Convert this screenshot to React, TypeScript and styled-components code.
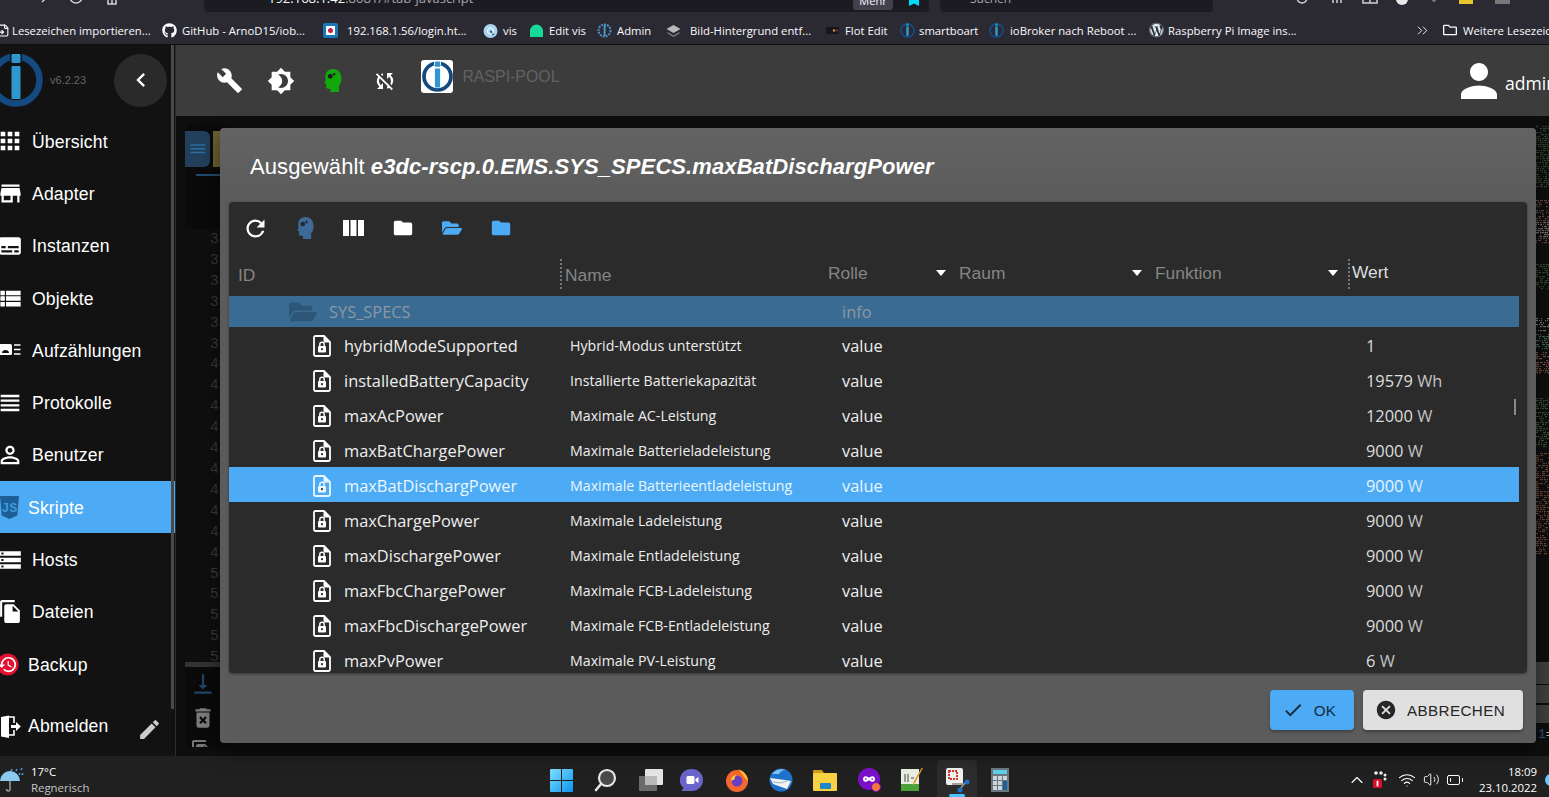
import React from "react";
import styled, { createGlobalStyle } from "styled-components";
import {
  MdApps, MdStore, MdSubtitles, MdViewList, MdViewHeadline, MdPersonOutline, MdStorage, MdFileCopy,
  MdEdit, MdBuild, MdBrightness4, MdSyncDisabled, MdPerson, MdRefresh, MdFolder, MdDehaze,
  MdCheck, MdCancel, MdVerticalAlignBottom, MdDeleteForever, MdChevronLeft,
} from "react-icons/md";
import { FaFolderOpen, FaGithub, FaWordpress, FaRegFolder } from "react-icons/fa";
import { ChevronUp, ChevronsRight, Wifi, Volume2, BatteryLow, FileInput } from "lucide-react";

const Global = createGlobalStyle`
  html, body { margin: 0; padding: 0; background: #0d0d0d; overflow: hidden; }
  * { box-sizing: border-box; }
`;

const Page = styled.div`
  position: relative; width: 1549px; height: 797px; overflow: hidden;
  display: flex; flex-direction: column;
  font-family: "Liberation Sans", Arial, sans-serif; color: #fff;
`;

/* browser chrome */
const Chrome = styled.div`
  height: 45px; flex: none; background: #2b2a33; border-bottom: 1px solid #0c0c0e;
  display: flex; flex-direction: column; overflow: hidden;
`;
const TopStrip = styled.div`height: 18px; flex: none; display: flex; position: relative;`;
const Sliver = styled.svg`width: 204px; height: 18px; flex: none;`;
const UrlBar = styled.div`
  width: 725px; height: 20px; margin-top: -8px; background: #1c1b22; border-radius: 4px; flex: none;
  display: flex; align-items: flex-start; padding-left: 64px; font: 13px "Open Sans", sans-serif; color: #fbfbfe;
  span { margin-top: -3px; } i { font-style: normal; color: #a5a5aa; }
`;
const Pill = styled.div`
  width: 40px; height: 14px; margin: -4px 0 0 -76px; background: #42414d; border-radius: 3px;
  font: 11px "Open Sans", sans-serif; color: #fbfbfe; text-align: center; line-height: 10px; flex: none;
`;
const Star = styled.div`
  width: 10px; height: 6px; margin-left: 16px; background: #00ddff; flex: none;
  clip-path: polygon(0 0, 100% 0, 100% 100%, 50% 60%, 0 100%);
`;
const SearchBar = styled.div`
  width: 273px; height: 20px; margin: -8px 0 0 21px; background: #1c1b22; border-radius: 4px; flex: none;
  font: 12px "Open Sans", sans-serif; color: #a5a5aa; padding: 0 0 0 30px; line-height: 13px;
`;
const Tools = styled.svg`width: 240px; height: 18px; margin-left: 84px; flex: none;`;
const Bookmarks = styled.div`
  height: 26px; flex: none; display: flex; align-items: center; margin-left: -4px; padding-bottom: 2px;
  font: 11.3px "Open Sans", sans-serif; color: #fbfbfe;
`;
const Bookmark = styled.div<{ $w: number; $gap?: number }>`
  width: ${(p) => p.$w}px; flex: none; display: flex; align-items: center; gap: ${(p) => p.$gap ?? 5}px; white-space: nowrap;
`;
const Fav = styled.span`width: 15px; height: 15px; flex: none; display: inline-flex; align-items: center; justify-content: center;`;
const BookmarkEnd = styled.div`
  margin-left: auto; display: flex; align-items: center; white-space: nowrap; width: 135px; gap: 6px; flex: none; overflow: hidden;
  svg { flex: none; }
  svg:first-child { margin-right: 6px; }
`;

/* app */
const Body = styled.div`flex: 1; display: flex; min-height: 0;`;
const Sidebar = styled.nav`
  width: 176px; flex: none; background: #121212; position: relative; display: flex; flex-direction: column;
  border-right: 1px solid #2e2e2e;
`;
const SideScroll = styled.div`position: absolute; left: 171px; top: 0; width: 3px; height: 664px; background: #4a4a4a;`;
const Brand = styled.div`height: 70px; flex: none; display: flex; align-items: center; position: relative;`;
const BrandLogo = styled.div`margin-left: -11px; width: 54px; height: 54px; flex: none;`;
const Version = styled.span`font-size: 11px; color: #666; margin-left: 7px; width: 64px; flex: none;`;
const Back = styled.button`
  width: 53px; height: 53px; border-radius: 50%; border: 0; background: #2a2a2a; color: #fff; flex: none; padding: 0;
  display: flex; align-items: center; justify-content: center;
`;
const NavList = styled.div`display: flex; flex-direction: column;`;
const NavItem = styled.div<{ $active?: boolean; $tight?: boolean }>`
  height: 52.3px; width: 175px; display: flex; align-items: center; font-size: 17.6px; letter-spacing: .16px; color: #fff;
  background: ${(p) => (p.$active ? "#4dabf5" : "transparent")};
  padding: 2px 0 0 ${(p) => (p.$tight ? 28 : 32)}px; position: relative;
`;
const NavIcon = styled.span`
  position: absolute; left: -1px; top: 50%; transform: translateY(-50%); width: 22px; height: 22px;
  display: flex; align-items: center; justify-content: center;
  svg { flex: none; }
`;
const Logout = styled(NavItem)`height: 60px; margin-top: auto; padding-top: 0;`;
const Pen = styled.span`position: absolute; left: 137px; top: 21px; color: #ccc; display: flex;`;

const Content = styled.div`flex: 1; display: flex; flex-direction: column; min-width: 0; background: #0e0e0e;`;
const TopBar = styled.header`
  height: 71px; flex: none; background: #3c3c3c; display: flex; align-items: center; padding-left: 28px;
`;
const TopIcon = styled.span<{ $color?: string }>`
  width: 51.6px; flex: none; display: flex; justify-content: center; color: ${(p) => p.$color ?? "#fff"};
`;
const LogoBox = styled.div`
  width: 32px; height: 33px; background: #fff; border-radius: 3px; padding: 1px 0.5px; margin-left: 11px; margin-top: -8px; flex: none;
`;
const HostName = styled.span`font-size: 15.9px; color: #626262; margin-left: 9px; margin-top: -7px;`;
const UserBox = styled.div`margin-left: auto; display: flex; align-items: center; width: 95px; flex: none; font: 17.6px "Open Sans", sans-serif; margin-top: 4px; white-space: nowrap; overflow: hidden;`;
const UserIcon = styled.span`display: flex; flex: none; margin: -6px -1px 0 -2px; transform: translateY(1px);`;

const Editor = styled.div`flex: 1; display: flex; min-height: 0; padding-top: 9px;`;
const Gutter = styled.div`width: 44px; margin-left: 9px; flex: none; display: flex; flex-direction: column; overflow: hidden; margin-bottom: 9px; border-radius: 6px;`;
const Tabs = styled.div`height: 104px; flex: none; background: #0a0a0a; padding-top: 6px; display: flex; gap: 3px; position: relative;`;
const TabBtn = styled.div<{ $bg: string }>`width: 25px; height: 36px; background: ${(p) => p.$bg}; border-radius: 0 6px 6px 0; flex: none; display: flex; align-items: center; justify-content: center; color: #2c6e9e;`;
const TabLine = styled.div`position: absolute; left: 11px; top: 49px; width: 30px; height: 2px; background: #234c70;`;
const Lines = styled.div`
  height: 433px; flex: none; padding: 0 0 0 25px; font: 14.5px/20.9px "Liberation Mono", monospace; color: #3a3a3a; background: #0f0f0f; overflow: hidden;
`;
const Split = styled.div`height: 5px; flex: none; background: #333;`;
const BottomTools = styled.div`flex: 1; background: #0a0a0a; display: flex; flex-direction: column; align-items: flex-start; padding: 4px 0 0 5px; gap: 8px; overflow: hidden; svg { flex: none; }`;
const Spacer = styled.div`flex: 1;`;
const Strip = styled.div`width: 13px; flex: none; display: flex; flex-direction: column; margin-bottom: 11px;`;
const Noise = styled.svg`width: 13px; height: 537px; flex: none; display: block; opacity: .75;`;
const StripBand = styled.div`height: 62px; flex: none; background: #414141; display: flex; flex-direction: column; padding-top: 22px; gap: 18px;`;
const StripLine = styled.div`height: 2px; background: #0a0a0a;`;
const StripFoot = styled.div`flex: 1; font: 13px "Liberation Mono", monospace; color: #2a5a8a; padding-left: 2px; padding-top: 3px; white-space: nowrap; span { color: #bbb; }`;

/* dialog */
const Dialog = styled.div`
  position: absolute; left: 220px; top: 128px; width: 1316px; height: 615px; border-radius: 4px;
  background: linear-gradient(#636363, #5b5b5b 12%, #5b5b5b); display: flex; flex-direction: column;
  box-shadow: 0 8px 20px rgba(0,0,0,.5);
`;
const Title = styled.h2`
  margin: 0; height: 74px; flex: none; padding: 24px 0 0 30px; font-weight: 400; font-size: 22px; letter-spacing: .09px; line-height: 30px; color: #fff; white-space: nowrap;
  b { font-style: italic; font-weight: 700; }
`;
const Paper = styled.div`
  margin: 0 9px; height: 471px; flex: none; background: #2b2b2b; border-radius: 4px; position: relative; overflow: hidden;
  box-shadow: 0 1px 3px rgba(0,0,0,.4); display: flex; flex-direction: column;
`;
const PaperBar = styled.div`height: 52px; flex: none; display: flex; align-items: center; padding-left: 2px;`;
const BarIcon = styled.span<{ $color?: string }>`width: 49px; flex: none; display: flex; justify-content: center; color: ${(p) => p.$color ?? "#fff"};`;
const TableHead = styled.div`height: 42px; flex: none; display: flex; font-size: 17.4px; color: #858585;`;
const HeadCell = styled.div<{ $w?: number; $dot?: boolean; $bright?: boolean; $pl?: number; $pr?: number; $up?: number }>`
  ${(p) => (p.$w ? `width: ${p.$w}px; flex: none;` : "flex: 1;")}
  display: flex; align-items: center; justify-content: space-between; position: relative;
  padding: 0 ${(p) => p.$pr ?? 0}px ${(p) => p.$up ?? 0}px ${(p) => p.$pl ?? 0}px;
  color: ${(p) => (p.$bright ? "#ddd" : "#858585")};
  ${(p) => p.$dot && `&::before { content: ""; position: absolute; left: 0; top: 5px; height: 30px; border-left: 2px dotted #777; }`}
`;
const Caret = styled.i`width: 0; height: 0; border: 5.5px solid transparent; border-top: 6px solid #fff; border-bottom: 0; flex: none;`;
const Rows = styled.div`flex: 1; overflow: hidden; margin-right: 8px;`;
const Row = styled.div<{ $kind?: "folder" | "selected" }>`
  display: grid; grid-template-columns: 341px 272px 524px 1fr; align-items: center;
  height: ${(p) => (p.$kind === "folder" ? 31.4 : 35)}px;
  padding-top: ${(p) => (p.$kind === "folder" ? 0 : 2)}px;
  background: ${(p) => (p.$kind === "folder" ? "#3a6b92" : p.$kind === "selected" ? "#4dabf5" : "transparent")};
  color: ${(p) => (p.$kind === "folder" ? "#8b99a5" : p.$kind === "selected" ? "#eaf6ff" : "#eee")};
  font: 16.4px "Open Sans", sans-serif;
`;
const IdCell = styled.div<{ $indent: number }>`display: flex; align-items: center; padding-left: ${(p) => p.$indent}px; gap: 13px; white-space: nowrap;`;
const DescCell = styled.div`font-size: 14.2px; white-space: nowrap;`;
const ValueCell = styled.div<{ $kind?: string }>`
  white-space: nowrap; color: ${(p) => (p.$kind === "selected" ? "#eaf6ff" : "#ddd")};
  span { opacity: .85; }
`;
const ScrollThumb = styled.div`position: absolute; right: 11px; top: 197px; width: 2px; height: 16px; background: #8a8a8a;`;
const Actions = styled.div`flex: 1; display: flex; justify-content: flex-end; align-items: center; gap: 9px; padding: 4px 13px 0 0;`;
const Btn = styled.button<{ $primary?: boolean; $w: number }>`
  height: 40px; width: ${(p) => p.$w}px; border: 0; border-radius: 4px; background: ${(p) => (p.$primary ? "#4dabf5" : "#e0e0e0")};
  color: ${(p) => (p.$primary ? "#152a3c" : "#262626")}; font: 15.2px "Liberation Sans", sans-serif; letter-spacing: .4px;
  display: flex; align-items: center; justify-content: center; gap: 10px; padding: 0 6px 0 0;
  box-shadow: 0 2px 3px rgba(0,0,0,.3);
`;

/* taskbar */
const Taskbar = styled.footer`
  height: 41px; flex: none; background: #202020; display: flex; align-items: center; position: relative; padding-right: 12px;
`;
const Weather = styled.div`width: 300px; display: flex; align-items: center; gap: 7px; flex: none; padding-top: 6px;`;
const WeatherText = styled.div`font: 11.4px/16px "Open Sans", sans-serif; color: #fff; margin-top: 1px; small { display: block; font-size: 11.4px; color: #c4c4c4; }`;
const Apps = styled.div`margin-left: 239px; display: flex; align-items: center; flex: none;`;
const AppBtn = styled.div<{ $w: number; $active?: boolean }>`
  width: ${(p) => p.$w}px; height: 41px; padding-top: 7px; display: flex; align-items: center; justify-content: center; flex: none; position: relative;
  ${(p) => p.$active && "background: #2c2c2c; border-radius: 4px 4px 0 0; height: 37px; margin-top: 4px; padding-top: 3px; &::after { content: ''; position: absolute; bottom: 0; left: 12px; width: 16px; height: 3px; background: #4cc2ff; border-radius: 2px; }"}
`;
const Tray = styled.div`margin-left: auto; display: flex; align-items: center; color: #fff; flex: none; padding-top: 6px;`;
const TrayIcon = styled.span<{ $w: number }>`width: ${(p) => p.$w}px; display: flex; justify-content: center; flex: none;`;
const Clock = styled.div`font: 11.4px/16px "Open Sans", sans-serif; text-align: right; width: 60px; margin-left: 8px; color: #fff;`;
const Notify = styled.div`position: absolute; left: 1545px; top: 18px; width: 12px; height: 12px; border-radius: 50%; background: #60cdff;`;

/* drawings */
const IoLogo = ({ size, ring = "#144a80", bar = "#2f97cf", bg = "transparent" }: { size: number; ring?: string; bar?: string; bg?: string }) => (
  <svg width={size} height={size} viewBox="0 0 54 54" style={{ display: "block" }}>
    <circle cx="27" cy="27" r="23.5" fill={bg} stroke={ring} strokeWidth="6.5" />
    <rect x="21" y="-1" width="12" height="8" fill={bg === "transparent" ? "#121212" : bg} />
    <rect x="22.5" y="1" width="9" height="9" rx="1" fill={bar} />
    <rect x="22.5" y="13" width="9" height="33" rx="1" fill={bar} />
  </svg>
);
const Head = ({ size, color, dot = "#1b1b1b" }: { size: number; color: string; dot?: string }) => (
  <svg width={size} height={size} viewBox="0 0 24 24" style={{ display: "block" }}>
    <path fill={color} d="M12.6 1C8.4 1 5.5 3.8 5.2 7.6 5 9.4 5.2 10.5 5.6 11.5L4.4 14.2c-.2.5.1.8.6.8h1v3.2c0 1 .7 1.6 1.6 1.6H10V23h8.2v-6c1.6-1.7 2.4-3.8 2.4-6.6C20.600 5 17.600 1 12.600 1z" />
    <circle cx="9.800" cy="8" r="2.300" fill={dot} />
    <path stroke={dot} strokeWidth="1" d="M13.500 4.500v3M12 6h3" />
  </svg>
);
const FileLock = ({ fg }: { fg: string }) => (
  <svg width="18" height="22" viewBox="0 0 18 22" style={{ display: "block", flex: "none" }}>
    <path fill="none" stroke={fg} strokeWidth="1.800" d="M2.500 1h8.500l6 6v12.500c0 .8-.6 1.500-1.500 1.500h-13c-.8 0-1.500-.7-1.500-1.500V2.500C1 1.700 1.700 1 2.500 1z" />
    <path fill={fg} d="M10.500 1l6.500 6.500h-5c-.8 0-1.500-.7-1.500-1.500z" />
    <rect x="5" y="11" width="8" height="6.500" rx="1" fill={fg} />
    <path fill="none" stroke={fg} strokeWidth="1.400" d="M6.800 11V9.400c0-2.900 4.400-2.900 4.400 0V11" />
    <circle cx="9" cy="14.200" r="1.100" fill="#2b2b2b" />
  </svg>
);
const Columns = () => (
  <svg width="21" height="16" viewBox="0 0 21 16" style={{ display: "block" }}>
    <path fill="#fff" d="M0 0h6v16H0zM7.500 0h6v16h-6zM15 0h6v16h-6z" />
  </svg>
);
const JsShield = () => (
  <svg width="19" height="23" viewBox="0 0 19 23" style={{ marginLeft: -2 }}>
    <path fill="#1c5f96" d="M0 0h19l-1.700 19.500L9.500 23l-7.800-3.500z" />
    <text x="9.500" y="15.500" textAnchor="middle" fontSize="13" fontWeight="700" fontFamily="Liberation Mono, monospace" fill="#3a9ad9">JS</text>
  </svg>
);
const BackupIcon = () => (
  <svg width="23" height="23" viewBox="0 0 23 23" style={{ marginLeft: -5 }}>
    <circle cx="11.500" cy="11.500" r="11" fill="#e3102f" />
    <g transform="translate(1.500 1.500) scale(.84)">
      <path fill="#fff" d="M13 3a9 9 0 0 0-9 9H1l3.900 3.900.1.100L9 12H6a7 7 0 1 1 2.100 4.900l-1.400 1.400A9 9 0 1 0 13 3zm-1 5v5l4.300 2.500.7-1.200-3.500-2.100V8z" />
    </g>
  </svg>
);
const EnumIcon = () => (
  <svg width="22" height="14" viewBox="0 0 22 14">
    <rect x="0" y="1" width="13" height="11" rx="1.500" fill="#fff" />
    <path fill="#121212" d="M3 10c0-2 1.500-3 3.500-3s3.500 1 3.500 3z" />
    <path stroke="#fff" strokeWidth="1.600" d="M15 2h6.500M15 6.500h6.500M15 11h6.500" />
  </svg>
);
const DoorOut = () => (
  <svg width="21" height="23" viewBox="0 0 21 23">
    <path fill="#fff" d="M1 2l8-1.500V23l-8-1.500z" />
    <path fill="none" stroke="#fff" strokeWidth="1.600" d="M9 2h5v6M14 15v5H9" />
    <path fill="#fff" d="M11 10h5V7l4.800 4.500L16 16v-3h-5z" />
  </svg>
);
const Noisy = () => {
  const bands: [number, number, string][] = [
    [110, 178, "#3f5a3a"], [190, 233, "#7a5a55"], [212, 228, "#8f8f8f"], [254, 279, "#42603f"], [308, 322, "#9a9a9a"],
    [324, 340, "#4a8a70"], [342, 363, "#9a6a58"], [388, 400, "#4a6a42"], [402, 438, "#4a6e42"], [443, 544, "#8a5a48"],
  ];
  let s = 12345;
  const rnd = () => ((s = (s * 1103515245 + 12345) & 0x7fffffff) / 0x7fffffff);
  const rects: React.ReactElement[] = [];
  bands.forEach(([a, b, c], i) => {
    for (let y = a; y < b; y += 2) {
      let x = 0;
      while (x < 13) {
        const w = 1 + Math.floor(rnd() * 3);
        if (rnd() > 0.3) rects.push(<rect key={`${i}-${y}-${x}`} x={x} y={y - 115} width={w} height="1.2" fill={c} />);
        x += w + 1;
      }
    }
  });
  return <Noise viewBox="0 0 13 537">{rects}</Noise>;
};

type FileRow = { id: string; desc: string; val: string; unit?: string; selected?: boolean };
const rows: FileRow[] = [
  { id: "hybridModeSupported", desc: "Hybrid-Modus unterstützt", val: "1" },
  { id: "installedBatteryCapacity", desc: "Installierte Batteriekapazität", val: "19579", unit: "Wh" },
  { id: "maxAcPower", desc: "Maximale AC-Leistung", val: "12000", unit: "W" },
  { id: "maxBatChargePower", desc: "Maximale Batterieladeleistung", val: "9000", unit: "W" },
  { id: "maxBatDischargPower", desc: "Maximale Batterieentladeleistung", val: "9000", unit: "W", selected: true },
  { id: "maxChargePower", desc: "Maximale Ladeleistung", val: "9000", unit: "W" },
  { id: "maxDischargePower", desc: "Maximale Entladeleistung", val: "9000", unit: "W" },
  { id: "maxFbcChargePower", desc: "Maximale FCB-Ladeleistung", val: "9000", unit: "W" },
  { id: "maxFbcDischargePower", desc: "Maximale FCB-Entladeleistung", val: "9000", unit: "W" },
  { id: "maxPvPower", desc: "Maximale PV-Leistung", val: "6", unit: "W" },
];

const nav = [
  { label: "Übersicht", icon: <MdApps size={28} /> },
  { label: "Adapter", icon: <MdStore size={27} /> },
  { label: "Instanzen", icon: <MdSubtitles size={26} /> },
  { label: "Objekte", icon: <MdViewList size={27} /> },
  { label: "Aufzählungen", icon: <EnumIcon /> },
  { label: "Protokolle", icon: <MdViewHeadline size={28} /> },
  { label: "Benutzer", icon: <MdPersonOutline size={28} /> },
  { label: "Skripte", icon: <JsShield />, active: true, tight: true },
  { label: "Hosts", icon: <MdStorage size={26} /> },
  { label: "Dateien", icon: <MdFileCopy size={25} /> },
  { label: "Backup", icon: <BackupIcon />, tight: true },
];

const bookmarks = [
  { w: 166, text: "Lesezeichen importieren...", icon: <FileInput size={13} />, gap: 1 },
  { w: 161, text: "GitHub - ArnoD15/iob...", icon: <FaGithub size={15} /> },
  { w: 160, text: "192.168.1.56/login.ht...", gap: 9, icon: (
    <svg width="15" height="15" viewBox="0 0 15 15"><rect width="15" height="15" rx="2" fill="#1a78b8" /><rect x="3" y="3" width="9" height="9" fill="#fff" /><circle cx="7.500" cy="7.500" r="2.500" fill="#c5214a" /></svg>
  ) },
  { w: 46, text: "vis", icon: (
    <svg width="15" height="15" viewBox="0 0 15 15"><circle cx="7.500" cy="8" r="7" fill="#a9d4f2" /><path d="M7.500 8l3 4" stroke="#245" strokeWidth="1.500" /><circle cx="7.500" cy="8" r="3" fill="none" stroke="#fff" /></svg>
  ) },
  { w: 68, text: "Edit vis", icon: (
    <svg width="15" height="15" viewBox="0 0 15 15"><path d="M1 8a6.500 6.500 0 1 1 13 0v6H1z" fill="#17d99a" /></svg>
  ) },
  { w: 69, text: "Admin", icon: (
    <svg width="15" height="15" viewBox="0 0 15 15"><circle cx="7.500" cy="7.500" r="6" fill="none" stroke="#4d8fc4" strokeWidth="2" strokeDasharray="2 1" /><rect x="6.700" y="2" width="1.800" height="11" fill="#4d9fd4" /></svg>
  ) },
  { w: 159, text: "Bild-Hintergrund entf...", gap: 9, icon: (
    <svg width="15" height="15" viewBox="0 0 15 15"><path d="M7.500 2l7 4-7 4-7-4z" fill="#b9b9b9" /><path d="M1.500 9l6 3.500 6-3.500v1.500l-6 3.500-6-3.500z" fill="#7f7f7f" /></svg>
  ) },
  { w: 75, text: "Flot Edit", icon: (
    <svg width="15" height="15" viewBox="0 0 15 15"><rect x="1" y="4" width="13" height="7" fill="#17161b" /><circle cx="9" cy="7.500" r="1.200" fill="#c9a12c" /><circle cx="12" cy="7.500" r="1" fill="#b1238a" /></svg>
  ) },
  { w: 89, text: "smartboart", gap: 4, icon: <IoLogo size={15} ring="#154a80" /> },
  { w: 160, text: "ioBroker nach Reboot ...", gap: 6, icon: <IoLogo size={15} ring="#154a80" /> },
  { w: 170, text: "Raspberry Pi Image ins...", gap: 4, icon: <FaWordpress size={16} color="#d9edf7" /> },
];

const code = Array.from({ length: 21 }, (_, i) => 34 + i);

export default function App() {
  return (
    <Page>
      <Global />
      <Chrome>
        <TopStrip>
          <Sliver viewBox="0 0 204 18">
            <g fill="none" stroke="#cfcfd8" strokeWidth="1.500">
              <circle cx="76" cy="-3" r="6" />
              <path d="M108 0v4h8V0M112 0v4" />
              <path d="M42 -2l2 2-2 2" />
            </g>
          </Sliver>
          <UrlBar><span>192.168.1.42<i>:8081/#tab-javascript</i></span></UrlBar>
          <Pill>Mehr</Pill>
          <Star />
          <SearchBar>Suchen</SearchBar>
          <Tools viewBox="0 0 240 18">
            <g fill="none" stroke="#cfcfd8" strokeWidth="1.500">
              <circle cx="5" cy="-2" r="5" />
              <path d="M36 0v3M40 0v3M44 0v3" />
              <path d="M66 -2v5h14v-5M73 0v3" />
            </g>
            <circle cx="105" cy="-1" r="6" fill="#e8e8e8" />
            <circle cx="137" cy="0" r="2" fill="#777" />
            <rect x="162" y="-3" width="14" height="7" fill="#e5c72a" />
            <rect x="198" y="-3" width="15" height="7" fill="#777" />
          </Tools>
        </TopStrip>
        <Bookmarks>
          {bookmarks.map((b) => (
            <Bookmark key={b.text} $w={b.w} $gap={b.gap}>
              <Fav>{b.icon}</Fav>
              {b.text}
            </Bookmark>
          ))}
          <BookmarkEnd>
            <ChevronsRight size={17} strokeWidth={1.300} />
            <FaRegFolder size={14} />
            Weitere Lesezeichen
          </BookmarkEnd>
        </Bookmarks>
      </Chrome>
      <Body>
        <Sidebar>
          <Brand>
            <BrandLogo><IoLogo size={54} /></BrandLogo>
            <Version>v6.2.23</Version>
            <Back><MdChevronLeft size={28} /></Back>
          </Brand>
          <NavList>
            {nav.map((n) => (
              <NavItem key={n.label} $active={n.active} $tight={n.tight}>
                <NavIcon>{n.icon}</NavIcon>
                {n.label}
              </NavItem>
            ))}
          </NavList>
          <Logout $tight>
            <NavIcon><DoorOut /></NavIcon>
            Abmelden
            <Pen><MdEdit size={25} /></Pen>
          </Logout>
          <SideScroll />
        </Sidebar>
        <Content>
          <TopBar>
            <TopIcon><MdBuild size={27} /></TopIcon>
            <TopIcon><MdBrightness4 size={28} /></TopIcon>
            <TopIcon><Head size={25} color="#12a90c" /></TopIcon>
            <TopIcon><MdSyncDisabled size={24} /></TopIcon>
            <LogoBox><IoLogo size={31} bg="#fff" /></LogoBox>
            <HostName>RASPI-POOL</HostName>
            <UserBox><UserIcon><MdPerson size={54} /></UserIcon>admin</UserBox>
          </TopBar>
          <Editor>
            <Gutter>
              <Tabs>
                <TabBtn $bg="#22405c"><MdDehaze size={18} /></TabBtn>
                <TabBtn $bg="#6b6232" />
                <TabLine />
              </Tabs>
              <Lines>{code.map((c) => <div key={c}>{c}</div>)}</Lines>
              <Split />
              <BottomTools>
                <MdVerticalAlignBottom size={26} color="#234464" />
                <MdDeleteForever size={26} color="#7c7c7c" />
                <MdFileCopy size={24} color="#777" />
              </BottomTools>
            </Gutter>
            <Spacer />
            <Strip>
              <Noisy />
              <StripBand><StripLine /><StripLine /><StripLine /></StripBand>
              <StripFoot>1<span>=</span></StripFoot>
            </Strip>
          </Editor>
        </Content>
      </Body>
      <Taskbar>
        <Weather>
          <svg width="24" height="28" viewBox="0 0 24 28" style={{ flex: "none" }}>
            <path d="M0 15a10 10 0 0 1 20 0z" fill="#8cc9f0" />
            <path d="M10 15v8c0 2.500-3.500 2.500-3.500 0" fill="none" stroke="#9a9a9a" strokeWidth="1.500" />
            <path d="M12 3l-1 2M17 3l-1 2M22 2l-1 2M20 7l-1 2M23 7l-1 2" stroke="#4f9fe0" strokeWidth="1.500" />
          </svg>
          <WeatherText>17°C<small>Regnerisch</small></WeatherText>
        </Weather>
        <Apps>
          <AppBtn $w={44}>
            <svg width="23" height="23" viewBox="0 0 23 23"><defs><linearGradient id="w" x1="0" y1="0" x2="1" y2="1"><stop offset="0" stopColor="#7fe0ff" /><stop offset="1" stopColor="#0d93f0" /></linearGradient></defs><path fill="url(#w)" d="M0 1a1 1 0 0 1 1-1h10v11H0zM12 0h10a1 1 0 0 1 1 1v10H12zM0 12h11v11H1a1 1 0 0 1-1-1zM12 12h11v10a1 1 0 0 1-1 1H12z" /></svg>
          </AppBtn>
          <AppBtn $w={44}>
            <svg width="24" height="24" viewBox="0 0 24 24"><circle cx="14" cy="10" r="8" fill="#4a4a4a" stroke="#e6e6e6" strokeWidth="2.200" /><path d="M8 16l-5 6" stroke="#e6e6e6" strokeWidth="2.600" strokeLinecap="round" /></svg>
          </AppBtn>
          <AppBtn $w={48}>
            <svg width="24" height="22" viewBox="0 0 24 22"><rect x="0" y="7" width="18" height="15" rx="1" fill="#6b6b6b" /><rect x="6" y="0" width="18" height="16" rx="1" fill="#efefef" opacity=".95" /><rect x="6" y="7" width="12" height="9" fill="#b9b9b9" /></svg>
          </AppBtn>
          <AppBtn $w={34}>
            <svg width="24" height="24" viewBox="0 0 24 24"><path d="M12 1a11 11 0 0 1 0 22H1.500l2-3A11 11 0 0 1 12 1z" fill="#6a63c9" /><rect x="6.500" y="8" width="8" height="8" rx="1.500" fill="#fff" /><path d="M15.500 11l3-2v6l-3-2z" fill="#fff" /></svg>
          </AppBtn>
          <AppBtn $w={56}>
            <svg width="24" height="24" viewBox="0 0 24 24"><circle cx="12" cy="13" r="11" fill="#f4682f" /><path d="M13 1c6 2 10 7 10 12-3-2-6-8-10-12z" fill="#ffbd2e" /><circle cx="12" cy="13" r="5.500" fill="#6a3ec2" /><path d="M6 13c0-4 3-6 6-6-2 1-3 3-2 4" fill="#ffcc3d" /></svg>
          </AppBtn>
          <AppBtn $w={32}>
            <svg width="24" height="24" viewBox="0 0 24 24"><circle cx="12" cy="12" r="11.500" fill="#1d72c9" /><path d="M3 6c3-4 9-6 14-4-4 0-6 2-7 4z" fill="#7fc4f5" /><path d="M1 10l15 2 6 1-4 8-14-5z" fill="#f2f2f2" /><path d="M4 14l8 1 6-2" stroke="#9db5c8" fill="none" /></svg>
          </AppBtn>
          <AppBtn $w={56}>
            <svg width="24" height="22" viewBox="0 0 24 22"><path d="M0 2a1 1 0 0 1 1-1h8l2 3h-11z" fill="#d09a1a" /><rect y="4" width="24" height="18" rx="1" fill="#fbd144" /><rect x="7" y="14" width="11" height="6" rx="1" fill="#1f86c9" /></svg>
          </AppBtn>
          <AppBtn $w={34}>
            <svg width="24" height="24" viewBox="0 0 24 24"><circle cx="11" cy="11" r="11" fill="#7c0fc9" /><path d="M6 11c0-4 5 0 5 0s5 4 5 0-5 0-5 0-5 4-5 0z" fill="none" stroke="#fff" strokeWidth="2" /><circle cx="18" cy="19" r="4.500" fill="#f1773a" stroke="#7c0fc9" /></svg>
          </AppBtn>
          <AppBtn $w={50}>
            <svg width="24" height="24" viewBox="0 0 24 24"><rect x="1" y="1" width="18" height="22" fill="#e8efe2" /><rect x="1" y="16" width="18" height="7" fill="#4aa33a" /><path d="M5 6v8M8 6v8M11 10h3" stroke="#444" /><path d="M23 0l-8 15-2 3 .5-4 8-14z" fill="#e39a27" /></svg>
          </AppBtn>
          <AppBtn $w={40} $active>
            <svg width="25" height="25" viewBox="0 0 25 25"><rect x="1" y="0" width="17" height="17" rx="2" fill="#f0f0f0" /><rect x="4" y="3" width="8" height="8" fill="none" stroke="#d23a24" strokeWidth="2" strokeDasharray="2 1" /><path d="M7 16h12" stroke="#888" strokeWidth="1.500" /><path d="M14 22l8-9" stroke="#999" strokeWidth="1.500" /><circle cx="22" cy="14" r="2.500" fill="#1a72c9" /><circle cx="15" cy="22" r="2.500" fill="#1a72c9" /></svg>
          </AppBtn>
          <AppBtn $w={46}>
            <svg width="19" height="24" viewBox="0 0 19 24"><rect width="18" height="24" fill="#6a7680" /><rect x="2" y="2" width="14" height="4" fill="#5fd0ea" /><g fill="#cdd4da"><rect x="2" y="8" width="4" height="4" /><rect x="7" y="8" width="4" height="4" /><rect x="2" y="13" width="4" height="4" /><rect x="7" y="13" width="4" height="4" /><rect x="2" y="18" width="4" height="4" /><rect x="7" y="18" width="4" height="4" /></g><rect x="12" y="13" width="4" height="9" fill="#1a5f9e" /><rect x="12" y="8" width="4" height="4" fill="#cdd4da" /></svg>
          </AppBtn>
        </Apps>
        <Tray>
          <TrayIcon $w={24}><ChevronUp size={20} strokeWidth={1.300} /></TrayIcon>
          <TrayIcon $w={24}>
            <svg width="16" height="17" viewBox="0 0 16 17"><g fill="#eee"><circle cx="3" cy="2" r="1.800" /><circle cx="8" cy="2" r="1.800" /><circle cx="12" cy="4" r="1.500" /><circle cx="12" cy="8" r="1.500" /></g><rect x="0" y="8" width="9" height="9" rx="1.500" fill="#d80f2b" /><path d="M4.500 9.800v5.500" stroke="#fff" strokeWidth="1.800" /></svg>
          </TrayIcon>
          <TrayIcon $w={28}><Wifi size={18} strokeWidth={1.600} /></TrayIcon>
          <TrayIcon $w={20}><Volume2 size={17} strokeWidth={1.300} /></TrayIcon>
          <TrayIcon $w={28}><BatteryLow size={18} strokeWidth={1.300} /></TrayIcon>
          <Clock>18:09<br />23.10.2022</Clock>
        </Tray>
        <Notify />
      </Taskbar>

      <Dialog>
        <Title>Ausgewählt <b>e3dc-rscp.0.EMS.SYS_SPECS.maxBatDischargPower</b></Title>
        <Paper>
          <PaperBar>
            <BarIcon><MdRefresh size={27} /></BarIcon>
            <BarIcon><Head size={24} color="#3d6a96" dot="#23272b" /></BarIcon>
            <BarIcon><Columns /></BarIcon>
            <BarIcon><MdFolder size={22} /></BarIcon>
            <BarIcon $color="#4dabf5"><FaFolderOpen size={20} /></BarIcon>
            <BarIcon $color="#4dabf5"><MdFolder size={22} /></BarIcon>
          </PaperBar>
          <TableHead>
            <HeadCell $w={331} $pl={9}>ID</HeadCell>
            <HeadCell $w={268} $pl={5} $dot>Name</HeadCell>
            <HeadCell $w={131} $pr={13} $up={4}>Rolle<Caret /></HeadCell>
            <HeadCell $w={196} $pr={13} $up={4}>Raum<Caret /></HeadCell>
            <HeadCell $w={193} $pr={10} $up={4}>Funktion<Caret /></HeadCell>
            <HeadCell $pl={4} $dot $bright $up={6}>Wert</HeadCell>
          </TableHead>
          <Rows>
            <Row $kind="folder">
              <IdCell $indent={60}>
                <FaFolderOpen size={28} color="#2c5577" style={{ flex: "none", marginRight: -1 }} />
                SYS_SPECS
              </IdCell>
              <div />
              <div>info</div>
              <div />
            </Row>
            {rows.map((r) => {
              const kind = r.selected ? "selected" : undefined;
              return (
                <Row key={r.id} $kind={kind}>
                  <IdCell $indent={84}><FileLock fg={r.selected ? "#eaf6ff" : "#fff"} />{r.id}</IdCell>
                  <DescCell>{r.desc}</DescCell>
                  <div>value</div>
                  <ValueCell $kind={kind}>{r.val}{r.unit && <span> {r.unit}</span>}</ValueCell>
                </Row>
              );
            })}
          </Rows>
          <ScrollThumb />
        </Paper>
        <Actions>
          <Btn $primary $w={84}><MdCheck size={22} />OK</Btn>
          <Btn $w={160}><MdCancel size={22} />ABBRECHEN</Btn>
        </Actions>
      </Dialog>
    </Page>
  );
}
